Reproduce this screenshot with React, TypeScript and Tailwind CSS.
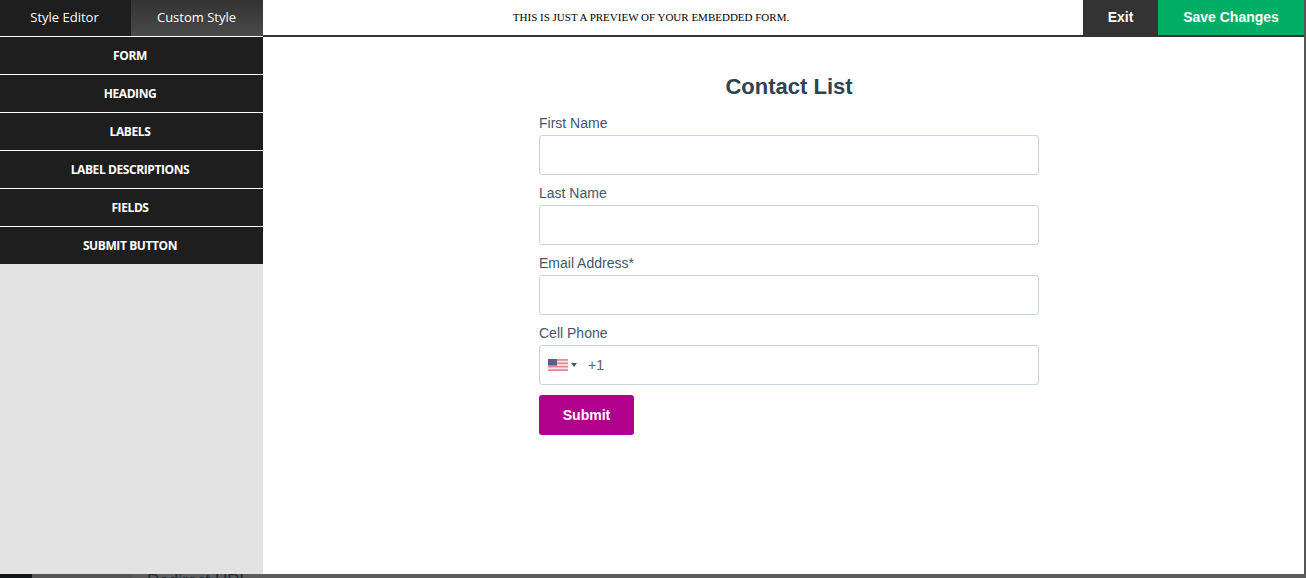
import React from 'react';

const menuItems = ['FORM', 'HEADING', 'LABELS', 'LABEL DESCRIPTIONS', 'FIELDS', 'SUBMIT BUTTON'];

const inputBox = 'h-10 w-full rounded-[3px] border border-[#c5d3e0] bg-white';

const Field: React.FC<{ label: string; children?: React.ReactNode }> = ({ label, children }) => (
    <div className="mb-2">
        <div className="h-[22px] text-[14px] leading-5 text-[#41566a]">{label}</div>
        {children ?? <div className={inputBox} />}
    </div>
);

const UsFlag = () => (
    <svg width="20" height="12" viewBox="0 0 20 12" className="block">
        <rect width="20" height="12" fill="#f4e6e8" />
        <rect y="0" width="20" height="1.8" fill="#e58a92" />
        <rect y="3.4" width="20" height="1.7" fill="#e58a92" />
        <rect y="6.8" width="20" height="1.7" fill="#e58a92" />
        <rect y="10.2" width="20" height="1.8" fill="#e58a92" />
        <rect width="9" height="6.6" fill="#5a5e90" />
    </svg>
);

export default function App() {
    return (
        <div className="flex h-[578px] w-[1306px] flex-col overflow-hidden bg-[#555] font-['Liberation_Sans',Arial,sans-serif]">
            <div className="flex h-[574px] w-full pr-[2px]">
                <aside className="flex w-[263px] shrink-0 flex-col bg-[#e3e3e3] font-['Open_Sans',sans-serif] text-white">
                    <div className="flex h-[37px] border-b border-white">
                        <div className="flex w-[131px] items-center justify-center bg-[#1e1e1e] pr-[2px] text-[13px]">Style Editor</div>
                        <div className="flex flex-1 items-center justify-center bg-gradient-to-b from-[#333] to-[#4a4a4a] pr-[1px] text-[13px]">Custom Style</div>
                    </div>
                    {menuItems.map(item => (
                        <div key={item} className="flex h-[38px] items-center justify-center border-b border-white bg-[#1e1e1e] pr-[3px] text-[12px] font-bold tracking-[-0.4px] last:h-[37px] last:border-b-0">
                            {item}
                        </div>
                    ))}
                </aside>
                <main className="flex flex-1 flex-col bg-white">
                    <header className="flex h-[37px] shrink-0 items-stretch border-b-2 border-[#333]">
                        <div className="flex flex-1 items-center justify-center pr-[44px] font-['Liberation_Serif',serif] text-[11px] text-black">
                            THIS IS JUST A PREVIEW OF YOUR EMBEDDED FORM.
                        </div>
                        <div className="flex w-[75px] items-center justify-center bg-[#333] text-[14px] font-bold text-white">Exit</div>
                        <div className="flex w-[146px] items-center justify-center bg-[#00ae66] text-[14px] font-bold text-white">Save Changes</div>
                    </header>
                    <div className="flex justify-center pl-[11px]">
                        <div className="w-[500px] pt-[36px]">
                            <h1 className="mb-[12px] h-[28px] text-center text-[22px] leading-7 font-bold text-[#2c4355]">Contact List</h1>
                            <Field label="First Name" />
                            <Field label="Last Name" />
                            <Field label="Email Address*" />
                            <Field label="Cell Phone">
                                <div className={`${inputBox} flex items-center pl-2`}>
                                    <UsFlag />
                                    <span className="ml-[3px] h-0 w-0 border-x-[3px] border-t-[4px] border-x-transparent border-t-[#555]" />
                                    <span className="ml-[11px] text-[14px] text-[#4d5f6f]">+1</span>
                                </div>
                            </Field>
                            <button className="mt-[2px] h-10 w-[95px] rounded-[3px] bg-[#b0008c] text-[14px] font-bold text-white">Submit</button>
                        </div>
                    </div>
                </main>
            </div>
            <div className="flex h-[4px] w-full overflow-hidden">
                <div className="w-[32px] bg-[#101518]" />
                <div className="w-[100px] bg-[#555]" />
                <div className="flex-1 bg-[#5c5c5c] pl-[15px]">
                    <div className="-mt-[3px] text-[17px] leading-5 text-[#1d2c38]">Redirect URL</div>
                </div>
            </div>
        </div>
    );
}
